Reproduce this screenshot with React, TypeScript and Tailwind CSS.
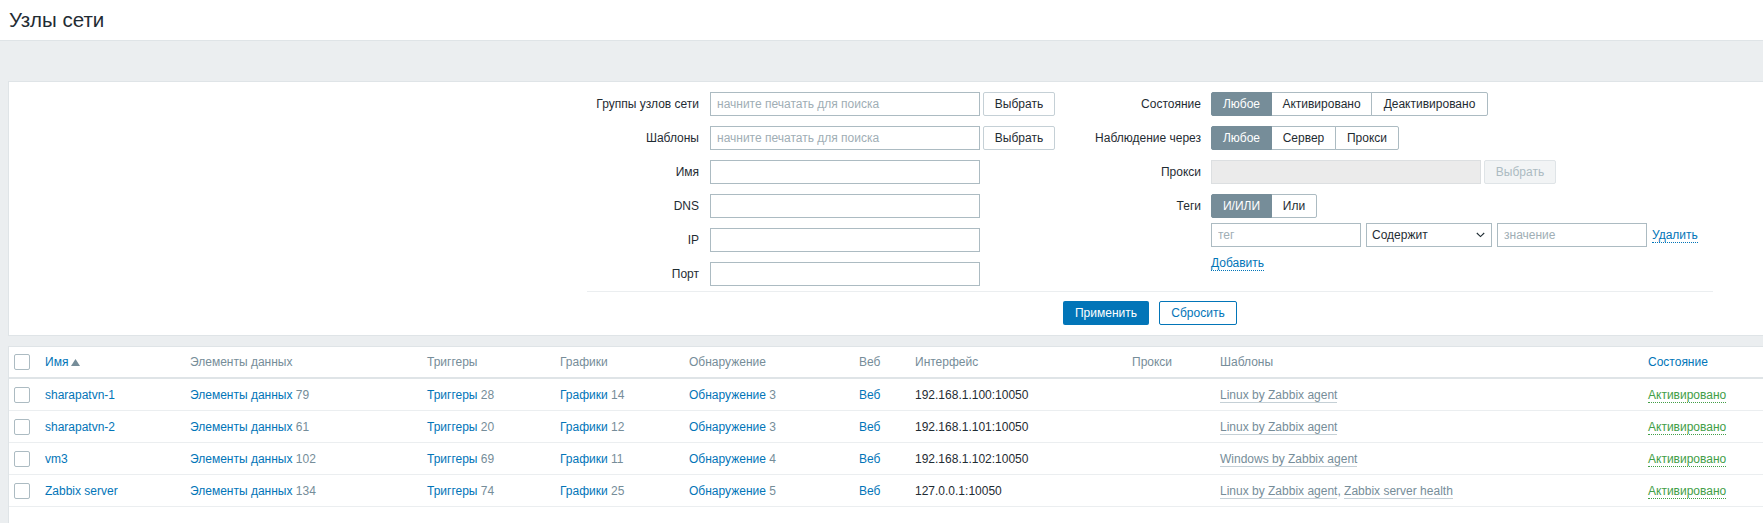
import React from "react";

type SegItem = { label: string; w: string; active?: boolean };

function Seg({ items }: { items: SegItem[] }) {
  return (
    <div className="flex h-6">
      {items.map((it, i) => (
        <div
          key={it.label}
          className={[
            "h-6 flex items-center justify-center border text-[12px]",
            it.w,
            it.active
              ? "bg-[#768d99] border-[#768d99] text-white relative z-10"
              : "bg-white border-[#acbbc2] text-[#1f2c33]",
            i === 0 ? "rounded-l-[2px]" : "-ml-px",
            i === items.length - 1 ? "rounded-r-[2px]" : "",
          ].join(" ")}
        >
          {it.label}
        </div>
      ))}
    </div>
  );
}

function TextInput({ placeholder, w }: { placeholder?: string; w: string }) {
  return (
    <input
      readOnly
      placeholder={placeholder}
      className={
        "h-6 border border-[#acbbc2] bg-white px-[6px] text-[12px] text-[#1f2c33] outline-none placeholder:text-[#a0aeb5] " +
        w
      }
    />
  );
}

function SelectBtn({ disabled }: { disabled?: boolean }) {
  return (
    <div
      className={
        disabled
          ? "h-6 w-[72px] flex items-center justify-center border border-[#dfe4e7] bg-[#f2f4f5] text-[#acbbc2] rounded-[2px]"
          : "h-6 w-[72px] flex items-center justify-center border border-[#c5d0d6] bg-white text-[#1f2c33] rounded-[2px]"
      }
    >
      Выбрать
    </div>
  );
}

function Checkbox() {
  return <div className="w-4 h-4 border border-[#acbbc2] rounded-[2px] bg-white" />;
}

type Row = {
  name: string;
  items: number;
  triggers: number;
  graphs: number;
  discovery: number;
  iface: string;
  templates: string[];
};

const rows: Row[] = [
  { name: "sharapatvn-1", items: 79, triggers: 28, graphs: 14, discovery: 3, iface: "192.168.1.100:10050", templates: ["Linux by Zabbix agent"] },
  { name: "sharapatvn-2", items: 61, triggers: 20, graphs: 12, discovery: 3, iface: "192.168.1.101:10050", templates: ["Linux by Zabbix agent"] },
  { name: "vm3", items: 102, triggers: 69, graphs: 11, discovery: 4, iface: "192.168.1.102:10050", templates: ["Windows by Zabbix agent"] },
  { name: "Zabbix server", items: 134, triggers: 74, graphs: 25, discovery: 5, iface: "127.0.0.1:10050", templates: ["Linux by Zabbix agent", "Zabbix server health"] },
];

const gridCols =
  "grid grid-cols-[31px_145px_237px_133px_129px_170px_56px_217px_88px_428px_1fr]";

function LinkCount({ label, n }: { label: string; n: number }) {
  return (
    <span className="whitespace-nowrap">
      <span className="text-[#0275b8]">{label}</span>
      <span className="text-[#768d99]"> {n}</span>
    </span>
  );
}

export default function App() {
  const leftLabels = ["Группы узлов сети", "Шаблоны", "Имя", "DNS", "IP", "Порт"];
  return (
    <div className="min-h-[523px] w-full overflow-hidden bg-[#ebeef0] font-['Liberation_Sans',Arial,sans-serif] text-[12px] text-[#1f2c33]">
      <header className="h-[41px] bg-white border-b border-[#dfe4e7] flex items-center pl-[9px]">
        <h1 className="text-[20.5px] leading-none text-[#1f2c33] font-normal">Узлы сети</h1>
      </header>

      {/* Filter panel */}
      <div className="mt-[40px] ml-2 bg-white border-l border-t border-b border-[#dfe4e7] pt-[10px] pb-[10px]">
        <div className="ml-[578px] w-[1126px]">
          <div className="flex items-start">
            {/* left column */}
            <div className="w-[503px] flex flex-col gap-[10px]">
              {leftLabels.map((l, i) => (
                <div key={l} className="flex items-center h-6">
                  <div className="w-[112px] text-right whitespace-nowrap">{l}</div>
                  <div className="ml-[11px]">
                    <TextInput w="w-[270px]" placeholder={i < 2 ? "начните печатать для поиска" : undefined} />
                  </div>
                  {i < 2 && (
                    <div className="ml-[3px]">
                      <SelectBtn />
                    </div>
                  )}
                </div>
              ))}
            </div>
            {/* right column */}
            <div className="flex flex-col">
              <div className="flex items-center h-6">
                <div className="w-[111px] text-right whitespace-nowrap">Состояние</div>
                <div className="ml-[10px]">
                  <Seg
                    items={[
                      { label: "Любое", w: "w-[61px]", active: true },
                      { label: "Активировано", w: "w-[101px]" },
                      { label: "Деактивировано", w: "w-[117px]" },
                    ]}
                  />
                </div>
              </div>
              <div className="flex items-center h-6 mt-[10px]">
                <div className="w-[111px] text-right whitespace-nowrap">Наблюдение через</div>
                <div className="ml-[10px]">
                  <Seg
                    items={[
                      { label: "Любое", w: "w-[61px]", active: true },
                      { label: "Сервер", w: "w-[65px]" },
                      { label: "Прокси", w: "w-[64px]" },
                    ]}
                  />
                </div>
              </div>
              <div className="flex items-center h-6 mt-[10px]">
                <div className="w-[111px] text-right whitespace-nowrap">Прокси</div>
                <div className="ml-[10px] h-6 w-[270px] border border-[#dcdfe1] bg-[#ebebeb]" />
                <div className="ml-[3px]">
                  <SelectBtn disabled />
                </div>
              </div>
              <div className="flex items-center h-6 mt-[10px]">
                <div className="w-[111px] text-right whitespace-nowrap">Теги</div>
                <div className="ml-[10px]">
                  <Seg
                    items={[
                      { label: "И/ИЛИ", w: "w-[61px]", active: true },
                      { label: "Или", w: "w-[46px]" },
                    ]}
                  />
                </div>
              </div>
              <div className="flex items-center h-6 mt-[5px] ml-[121px] gap-[5px]">
                <TextInput w="w-[150px]" placeholder="тег" />
                <div className="h-6 w-[126px] border border-[#acbbc2] bg-white flex items-center justify-between pl-[5px] pr-[6px]">
                  <span>Содержит</span>
                  <svg width="9" height="6" viewBox="0 0 9 6" fill="none">
                    <path d="M0.8 1 L4.5 4.6 L8.2 1" stroke="#1f2c33" strokeWidth="1.1" />
                  </svg>
                </div>
                <TextInput w="w-[150px]" placeholder="значение" />
                <span className="text-[#0275b8] border-b border-dotted border-[#0275b8] leading-[14px]">Удалить</span>
              </div>
              <div className="mt-[8px] ml-[121px] h-4 flex items-center">
                <span className="text-[#0275b8] border-b border-dotted border-[#0275b8] leading-[14px]">Добавить</span>
              </div>
            </div>
          </div>

          <div className="mt-[5px] h-px bg-[#ebeef0]" />

          <div className="mt-[9px] flex justify-center gap-[10px]">
            <div className="h-6 w-[86px] rounded-[2px] bg-[#0275b8] text-white flex items-center justify-center">
              Применить
            </div>
            <div className="h-6 w-[78px] rounded-[2px] border border-[#0275b8] bg-white text-[#0275b8] flex items-center justify-center">
              Сбросить
            </div>
          </div>
        </div>
      </div>

      {/* Table */}
      <div className="mt-[10px] ml-2 bg-white border-l border-t border-[#dfe4e7] min-h-[177px]">
        <div className={gridCols + " h-[32px] border-b-2 border-[#dfe4e7] items-center text-[#768d99]"}>
          <div className="pl-[5px]">
            <Checkbox />
          </div>
          <div className="px-[5px] flex items-center gap-[3px]">
            <span className="text-[#0275b8]">Имя</span>
            <svg width="9" height="7" viewBox="0 0 9 7">
              <path d="M0 7 L4.5 0 L9 7 Z" fill="#768d99" />
            </svg>
          </div>
          <div className="px-[5px]">Элементы данных</div>
          <div className="px-[5px]">Триггеры</div>
          <div className="px-[5px]">Графики</div>
          <div className="px-[5px]">Обнаружение</div>
          <div className="px-[5px]">Веб</div>
          <div className="px-[5px]">Интерфейс</div>
          <div className="px-[5px]">Прокси</div>
          <div className="px-[5px]">Шаблоны</div>
          <div className="px-[5px] text-[#0275b8]">Состояние</div>
        </div>
        {rows.map((r) => (
          <div key={r.name} className={gridCols + " h-[32px] border-b border-[#ebeef0] items-center"}>
            <div className="pl-[5px]">
              <Checkbox />
            </div>
            <div className="px-[5px] text-[#0275b8] whitespace-nowrap">{r.name}</div>
            <div className="px-[5px]">
              <LinkCount label="Элементы данных" n={r.items} />
            </div>
            <div className="px-[5px]">
              <LinkCount label="Триггеры" n={r.triggers} />
            </div>
            <div className="px-[5px]">
              <LinkCount label="Графики" n={r.graphs} />
            </div>
            <div className="px-[5px]">
              <LinkCount label="Обнаружение" n={r.discovery} />
            </div>
            <div className="px-[5px] text-[#0275b8]">Веб</div>
            <div className="px-[5px] whitespace-nowrap">{r.iface}</div>
            <div className="px-[5px]" />
            <div className="px-[5px] whitespace-nowrap text-[#768d99]">
              {r.templates.map((t, i) => (
                <React.Fragment key={t}>
                  {i > 0 && <span>, </span>}
                  <span className="border-b border-[#c5d0d6] leading-[14px]">{t}</span>
                </React.Fragment>
              ))}
            </div>
            <div className="px-[5px]">
              <span className="text-[#429e47] border-b border-dotted border-[#429e47] leading-[14px]">Активировано</span>
            </div>
          </div>
        ))}
      </div>
    </div>
  );
}
